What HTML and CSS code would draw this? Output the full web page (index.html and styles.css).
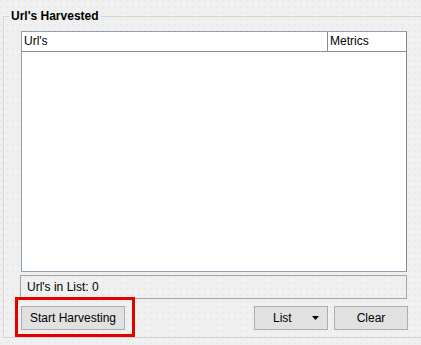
FILE: index.html
```html
<!DOCTYPE html>
<html lang="en">
  <head>
    <meta charset="utf-8">
    <title>Url's Harvested</title>
    <link rel="stylesheet" href="styles.css">
  </head>
  <body>
    <fieldset class="group">
      <legend>Url's Harvested</legend>
      <div class="table">
        <div class="thead">
          <div class="col-url">Url's</div>
          <div class="col-metrics">Metrics</div>
        </div>
      </div>
      <div class="status">Url's in List: 0</div>
      <div class="buttons">
        <div class="mark">
          <button class="btn btn-start">Start Harvesting</button>
        </div>
        <button class="btn btn-list">
          <span>List</span>
          <svg class="arrow" width="7" height="4" viewBox="0 0 7 4"><polygon points="0,0 7,0 3.5,4" fill="#000"/></svg>
        </button>
        <button class="btn btn-clear">Clear</button>
      </div>
    </fieldset>
  </body>
</html>
```

FILE: styles.css
```css
body{
  margin: 0;
  height: 345px;
  overflow: hidden;
  background-color: #f0f0f0;
  background-image: radial-gradient(circle at 1px 1px, #e0e0e0 0.6px, transparent 0.8px);
  background-size: 6px 6px;
  font-family: "Liberation Sans", Arial, sans-serif;
  font-size: 12px;
  color: #000;
}
.group{
  margin: 9px 0 0 3px;
  padding: 8px 0 7px 17px;
  border: 1px solid #d5d5d5;
  border-right: none;
  min-width: 0;
}
.group legend{
  margin-left: -12px;
  padding: 0 2px;
  font-weight: bold;
  line-height: 14px;
}
.table{
  box-sizing: border-box;
  width: 386px;
  height: 241px;
  background: #fff;
  border: 1px solid #8ea0b2;
  border-right-color: #7d8791;
}
.thead{
  display: flex;
  box-sizing: border-box;
  height: 20px;
  border-bottom: 1px solid #8c8c8c;
  line-height: 19px;
}
.col-url{
  width: 303px;
  padding-left: 2px;
  border-right: 1px solid #8c8c8c;
}
.col-metrics{
  padding-left: 2px;
}
.status{
  box-sizing: border-box;
  width: 387px;
  height: 24px;
  margin: 3px 0 0 -1px;
  padding-left: 6px;
  border: 1px solid #a5a5a5;
  line-height: 22px;
}
.buttons{
  display: flex;
  width: 387px;
  margin-top: 7px;
}
.mark{
  position: relative;
}
.mark::after{
  content: "";
  position: absolute;
  left: -6px;
  top: -9px;
  right: -10px;
  bottom: -7px;
  border: 3px solid #e50000;
}
.btn{
  box-sizing: border-box;
  height: 24px;
  padding: 0;
  background: #e1e1e1;
  border: 1px solid #adadad;
  font-family: "Liberation Sans", Arial, sans-serif;
  font-size: 12px;
  color: #000;
}
.btn-start{
  width: 104px;
}
.btn-list{
  display: flex;
  align-items: center;
  width: 74px;
  margin-left: auto;
  padding-left: 18px;
}
.btn-list .arrow{
  margin-left: auto;
  margin-right: 8px;
}
.btn-clear{
  width: 74px;
  margin-left: 6px;
}
```
